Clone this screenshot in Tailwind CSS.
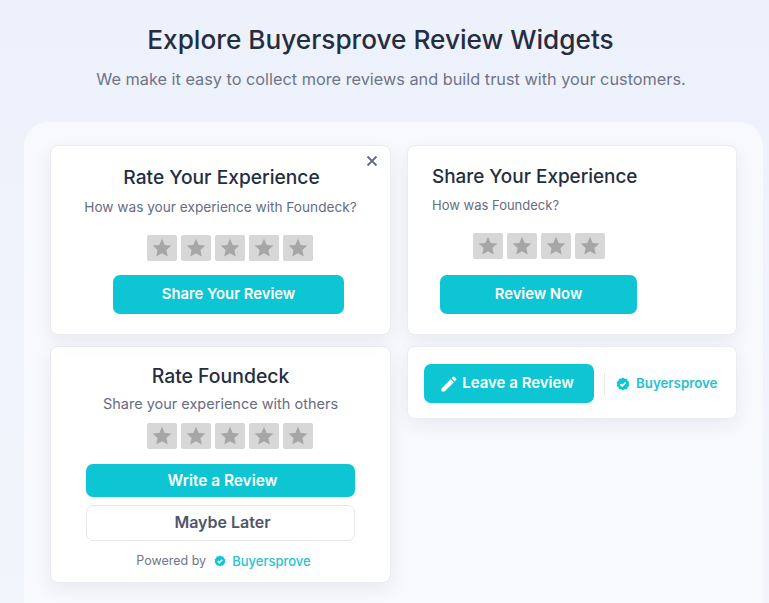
<!DOCTYPE html>
<html lang="en">
<head>
    <meta charset="UTF-8">
    <meta name="viewport" content="width=device-width, initial-scale=1.0">
    <title>Buyersprove Review Widgets</title>
    <script src="https://cdn.jsdelivr.net/npm/@tailwindcss/browser@4"></script>
</head>
<body class="font-['Inter',sans-serif]">

<div class="relative h-[603px] w-[769px] overflow-hidden bg-gradient-to-b from-[#edf1fb] to-[#f2f5fc]">

    <!-- Header -->
    <div class="h-[122px] pt-[23px] text-center">
        <h1 class="pr-[8px] text-[26.2px] leading-[34px] font-medium text-[#252d3f]">Explore Buyersprove Review Widgets</h1>
        <p class="mt-[10px] pl-[13px] text-[16.3px] leading-[24px] text-[#6f7489]">We make it easy to collect more reviews and build trust with your customers.</p>
    </div>

    <!-- Panel -->
    <div class="ml-[24px] h-[481px] w-[739px] rounded-tl-[24px] rounded-tr-[24px] bg-[#f8f9fd] pt-[23px] pl-[26px]">
        <div class="grid grid-cols-[341px_330px] gap-x-[16px] gap-y-[11px] items-start">

            <!-- Rate Your Experience -->
            <div class="relative flex h-[190px] flex-col items-center rounded-lg border border-[#eaecf2] bg-white pt-[18px] shadow-[0_6px_18px_rgba(80,90,130,0.09)]">
                <button class="absolute right-[12px] top-[9px] text-[#646b80]">
                    <svg class="h-[12px] w-[12px]" viewBox="0 0 12 12" fill="none" stroke="currentColor" stroke-width="1.8"><path d="M1.5 1.5l9 9M10.5 1.5l-9 9"/></svg>
                </button>
                <h2 class="ml-[2px] text-[19.2px] leading-[26px] font-medium text-[#252d3f]">Rate Your Experience</h2>
                <p class="mt-[7px] text-[13.65px] leading-[20px] text-[#676c82]">How was your experience with Foundeck?</p>
                <div class="mt-[18px] ml-[18px] flex gap-[4px]">
                    <span class="flex h-[26px] w-[30px] items-center justify-center rounded-[2px] bg-[#d7d7d7]"><svg class="h-[22px] w-[22px]" viewBox="0 0 24 24" fill="#a6a6a6"><path d="M12 2l3 6.6 7.2.8-5.4 4.8 1.5 7.1L12 17.7l-6.3 3.6 1.5-7.1L1.8 9.4 9 8.6z"/></svg></span>
                    <span class="flex h-[26px] w-[30px] items-center justify-center rounded-[2px] bg-[#d7d7d7]"><svg class="h-[22px] w-[22px]" viewBox="0 0 24 24" fill="#a6a6a6"><path d="M12 2l3 6.6 7.2.8-5.4 4.8 1.5 7.1L12 17.7l-6.3 3.6 1.5-7.1L1.8 9.4 9 8.6z"/></svg></span>
                    <span class="flex h-[26px] w-[30px] items-center justify-center rounded-[2px] bg-[#d7d7d7]"><svg class="h-[22px] w-[22px]" viewBox="0 0 24 24" fill="#a6a6a6"><path d="M12 2l3 6.6 7.2.8-5.4 4.8 1.5 7.1L12 17.7l-6.3 3.6 1.5-7.1L1.8 9.4 9 8.6z"/></svg></span>
                    <span class="flex h-[26px] w-[30px] items-center justify-center rounded-[2px] bg-[#d7d7d7]"><svg class="h-[22px] w-[22px]" viewBox="0 0 24 24" fill="#a6a6a6"><path d="M12 2l3 6.6 7.2.8-5.4 4.8 1.5 7.1L12 17.7l-6.3 3.6 1.5-7.1L1.8 9.4 9 8.6z"/></svg></span>
                    <span class="flex h-[26px] w-[30px] items-center justify-center rounded-[2px] bg-[#d7d7d7]"><svg class="h-[22px] w-[22px]" viewBox="0 0 24 24" fill="#a6a6a6"><path d="M12 2l3 6.6 7.2.8-5.4 4.8 1.5 7.1L12 17.7l-6.3 3.6 1.5-7.1L1.8 9.4 9 8.6z"/></svg></span>
                </div>
                <button class="mt-[14px] ml-[16px] h-[39px] w-[231px] rounded-[7px] bg-[#0ec5d3] text-[14.8px] font-semibold text-white">Share Your Review</button>
            </div>

            <!-- Share Your Experience -->
            <div class="flex h-[190px] flex-col rounded-lg border border-[#eaecf2] bg-white pt-[18px] pl-[24px] shadow-[0_6px_18px_rgba(80,90,130,0.09)]">
                <h2 class="text-[18.9px] leading-[26px] font-medium text-[#252d3f]">Share Your Experience</h2>
                <p class="mt-[5px] text-[13px] leading-[20px] text-[#676c82]">How was Foundeck?</p>
                <div class="mt-[18px] ml-[41px] flex gap-[4px]">
                    <span class="flex h-[26px] w-[30px] items-center justify-center rounded-[2px] bg-[#d7d7d7]"><svg class="h-[22px] w-[22px]" viewBox="0 0 24 24" fill="#a6a6a6"><path d="M12 2l3 6.6 7.2.8-5.4 4.8 1.5 7.1L12 17.7l-6.3 3.6 1.5-7.1L1.8 9.4 9 8.6z"/></svg></span>
                    <span class="flex h-[26px] w-[30px] items-center justify-center rounded-[2px] bg-[#d7d7d7]"><svg class="h-[22px] w-[22px]" viewBox="0 0 24 24" fill="#a6a6a6"><path d="M12 2l3 6.6 7.2.8-5.4 4.8 1.5 7.1L12 17.7l-6.3 3.6 1.5-7.1L1.8 9.4 9 8.6z"/></svg></span>
                    <span class="flex h-[26px] w-[30px] items-center justify-center rounded-[2px] bg-[#d7d7d7]"><svg class="h-[22px] w-[22px]" viewBox="0 0 24 24" fill="#a6a6a6"><path d="M12 2l3 6.6 7.2.8-5.4 4.8 1.5 7.1L12 17.7l-6.3 3.6 1.5-7.1L1.8 9.4 9 8.6z"/></svg></span>
                    <span class="flex h-[26px] w-[30px] items-center justify-center rounded-[2px] bg-[#d7d7d7]"><svg class="h-[22px] w-[22px]" viewBox="0 0 24 24" fill="#a6a6a6"><path d="M12 2l3 6.6 7.2.8-5.4 4.8 1.5 7.1L12 17.7l-6.3 3.6 1.5-7.1L1.8 9.4 9 8.6z"/></svg></span>
                </div>
                <button class="mt-[16px] ml-[8px] h-[39px] w-[197px] rounded-[7px] bg-[#0ec5d3] text-[14.8px] font-semibold text-white">Review Now</button>
            </div>

            <!-- Rate Foundeck -->
            <div class="flex h-[237px] flex-col items-center rounded-lg border border-[#eaecf2] bg-white pt-[16px] shadow-[0_6px_18px_rgba(80,90,130,0.09)]">
                <h2 class="text-[19.4px] leading-[26px] font-medium text-[#252d3f]">Rate Foundeck</h2>
                <p class="mt-[5px] text-[14.5px] leading-[20px] text-[#676c82]">Share your experience with others</p>
                <div class="mt-[9px] ml-[18px] flex gap-[4px]">
                    <span class="flex h-[26px] w-[30px] items-center justify-center rounded-[2px] bg-[#d7d7d7]"><svg class="h-[22px] w-[22px]" viewBox="0 0 24 24" fill="#a6a6a6"><path d="M12 2l3 6.6 7.2.8-5.4 4.8 1.5 7.1L12 17.7l-6.3 3.6 1.5-7.1L1.8 9.4 9 8.6z"/></svg></span>
                    <span class="flex h-[26px] w-[30px] items-center justify-center rounded-[2px] bg-[#d7d7d7]"><svg class="h-[22px] w-[22px]" viewBox="0 0 24 24" fill="#a6a6a6"><path d="M12 2l3 6.6 7.2.8-5.4 4.8 1.5 7.1L12 17.7l-6.3 3.6 1.5-7.1L1.8 9.4 9 8.6z"/></svg></span>
                    <span class="flex h-[26px] w-[30px] items-center justify-center rounded-[2px] bg-[#d7d7d7]"><svg class="h-[22px] w-[22px]" viewBox="0 0 24 24" fill="#a6a6a6"><path d="M12 2l3 6.6 7.2.8-5.4 4.8 1.5 7.1L12 17.7l-6.3 3.6 1.5-7.1L1.8 9.4 9 8.6z"/></svg></span>
                    <span class="flex h-[26px] w-[30px] items-center justify-center rounded-[2px] bg-[#d7d7d7]"><svg class="h-[22px] w-[22px]" viewBox="0 0 24 24" fill="#a6a6a6"><path d="M12 2l3 6.6 7.2.8-5.4 4.8 1.5 7.1L12 17.7l-6.3 3.6 1.5-7.1L1.8 9.4 9 8.6z"/></svg></span>
                    <span class="flex h-[26px] w-[30px] items-center justify-center rounded-[2px] bg-[#d7d7d7]"><svg class="h-[22px] w-[22px]" viewBox="0 0 24 24" fill="#a6a6a6"><path d="M12 2l3 6.6 7.2.8-5.4 4.8 1.5 7.1L12 17.7l-6.3 3.6 1.5-7.1L1.8 9.4 9 8.6z"/></svg></span>
                </div>
                <button class="mt-[15px] h-[33px] w-[269px] rounded-[7px] bg-[#0ec5d3] pl-[4px] text-[15.4px] font-semibold text-white">Write a Review</button>
                <button class="mt-[8px] h-[36px] w-[269px] rounded-[7px] border border-[#e4e6ec] bg-white pb-[2px] pl-[4px] text-[16px] font-semibold text-[#50556b]">Maybe Later</button>
                <div class="mt-[11px] ml-[6px] flex items-center text-[12.5px] leading-[18px]">
                    <span class="text-[#71768a]">Powered by</span>
                    <svg class="ml-[8px] h-[12px] w-[12px]" viewBox="0 0 24 24"><path fill="#0ec5d3" d="M12 1l3 2.200 3.700-.1 1.100 3.500 3 2.200L21.700 12l1.100 3.200-3 2.200-1.100 3.500-3.700-.1L12 23l-3-2.200-3.700.1-1.100-3.500-3-2.200L2.300 12 1.200 8.800l3-2.200 1.100-3.500 3.700.1z"/><path fill="none" stroke="#fff" stroke-width="3" d="M7.500 12.200l3.200 3.200 5.800-6"/></svg>
                    <span class="ml-[6px] text-[13px] font-medium text-[#27c2d2]">Buyersprove</span>
                </div>
            </div>

            <!-- Leave a Review -->
            <div class="flex h-[73px] items-center rounded-lg border border-[#eaecf2] bg-white pt-[2px] pl-[16px] shadow-[0_6px_18px_rgba(80,90,130,0.09)]">
                <button class="flex h-[39px] w-[170px] items-center justify-center rounded-[7px] bg-[#0ec5d3] pr-[5px] text-[15px] font-semibold text-white">
                    <svg class="mr-[3px] h-[20px] w-[20px]" viewBox="0 0 24 24" fill="#fff"><path d="M3 17.250V21h3.750L17.810 9.940l-3.750-3.750L3 17.250zM20.710 7.040a1 1 0 000-1.410l-2.340-2.340a1 1 0 00-1.410 0l-1.830 1.830 3.750 3.750 1.830-1.830z"/></svg>
                    Leave a Review
                </button>
                <span class="ml-[10px] h-[22px] w-px bg-[#e8eaef]"></span>
                <svg class="ml-[11px] h-[14px] w-[14px]" viewBox="0 0 24 24"><path fill="#0ec5d3" d="M12 1l3 2.200 3.700-.1 1.100 3.500 3 2.200L21.700 12l1.100 3.200-3 2.200-1.100 3.500-3.700-.1L12 23l-3-2.200-3.700.1-1.100-3.500-3-2.200L2.300 12 1.200 8.800l3-2.200 1.100-3.500 3.700.1z"/><path fill="none" stroke="#fff" stroke-width="3" d="M7.500 12.200l3.200 3.200 5.800-6"/></svg>
                <span class="ml-[6px] text-[13.300px] font-semibold text-[#27c2d2]">Buyersprove</span>
            </div>

        </div>
    </div>
</div>

</body>
</html>
